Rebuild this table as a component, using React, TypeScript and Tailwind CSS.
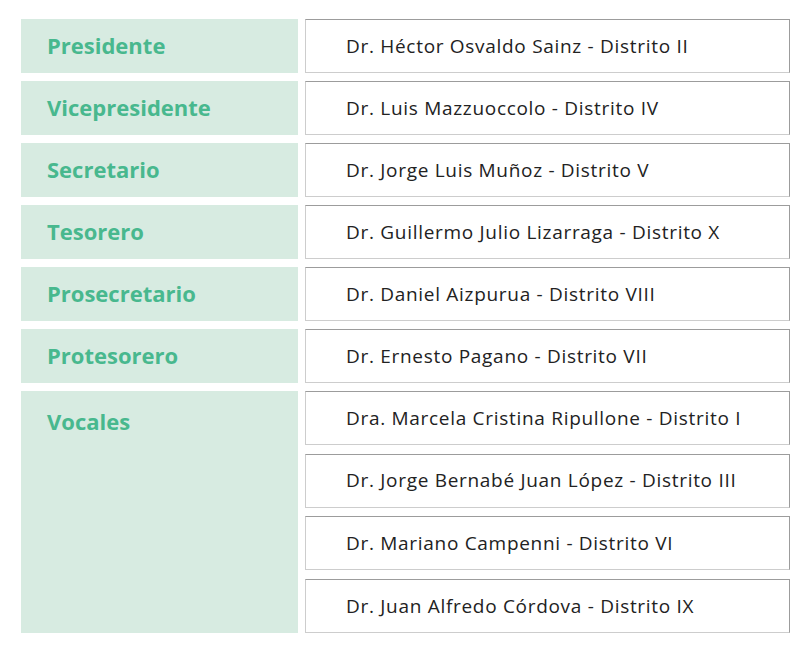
import React from "react";

const rows: [string, string][] = [
  ["Presidente", "Dr. Héctor Osvaldo Sainz - Distrito II"],
  ["Vicepresidente", "Dr. Luis Mazzuoccolo - Distrito IV"],
  ["Secretario", "Dr. Jorge Luis Muñoz - Distrito V"],
  ["Tesorero", "Dr. Guillermo Julio Lizarraga - Distrito X"],
  ["Prosecretario", "Dr. Daniel Aizpurua - Distrito VIII"],
  ["Protesorero", "Dr. Ernesto Pagano - Distrito VII"],
];

const vocales = [
  "Dra. Marcela Cristina Ripullone - Distrito I",
  "Dr. Jorge Bernabé Juan López - Distrito III",
  "Dr. Mariano Campenni - Distrito VI",
  "Dr. Juan Alfredo Córdova - Distrito IX",
];

function Right({ text }: { text: string }) {
  return (
    <div className="h-[54px] border border-t-[#9c9c9c] border-r-[#9c9c9c] border-b-[#cdcdcd] border-l-[#cdcdcd] bg-white flex items-center pl-[40px] text-[19px] tracking-[0.7px] text-[#222]">
      {text}
    </div>
  );
}

export default function App() {
  return (
    <div className="w-[810px] h-[652px] bg-white pt-[19px] pl-[21px]" style={{ fontFamily: '"Open Sans", Lato, sans-serif' }}>
      <div className="grid grid-cols-[277px_485px] gap-x-[7px] gap-y-[8px]">
        {rows.map(([role, name]) => (
          <React.Fragment key={role}>
            <div className="h-[54px] bg-[#d7ebe1] flex items-center pl-[26px] pb-[2px] text-[22px] font-bold text-[#48b88e]">
              {role}
            </div>
            <Right text={name} />
          </React.Fragment>
        ))}
        <div className="bg-[#d7ebe1] pl-[26px] text-[22px] font-bold text-[#48b88e]">
          <div className="h-[54px] pt-[6px] flex items-center">Vocales</div>
        </div>
        <div className="h-[242px] flex flex-col justify-between">
          {vocales.map((v) => (
            <Right key={v} text={v} />
          ))}
        </div>
      </div>
    </div>
  );
}
